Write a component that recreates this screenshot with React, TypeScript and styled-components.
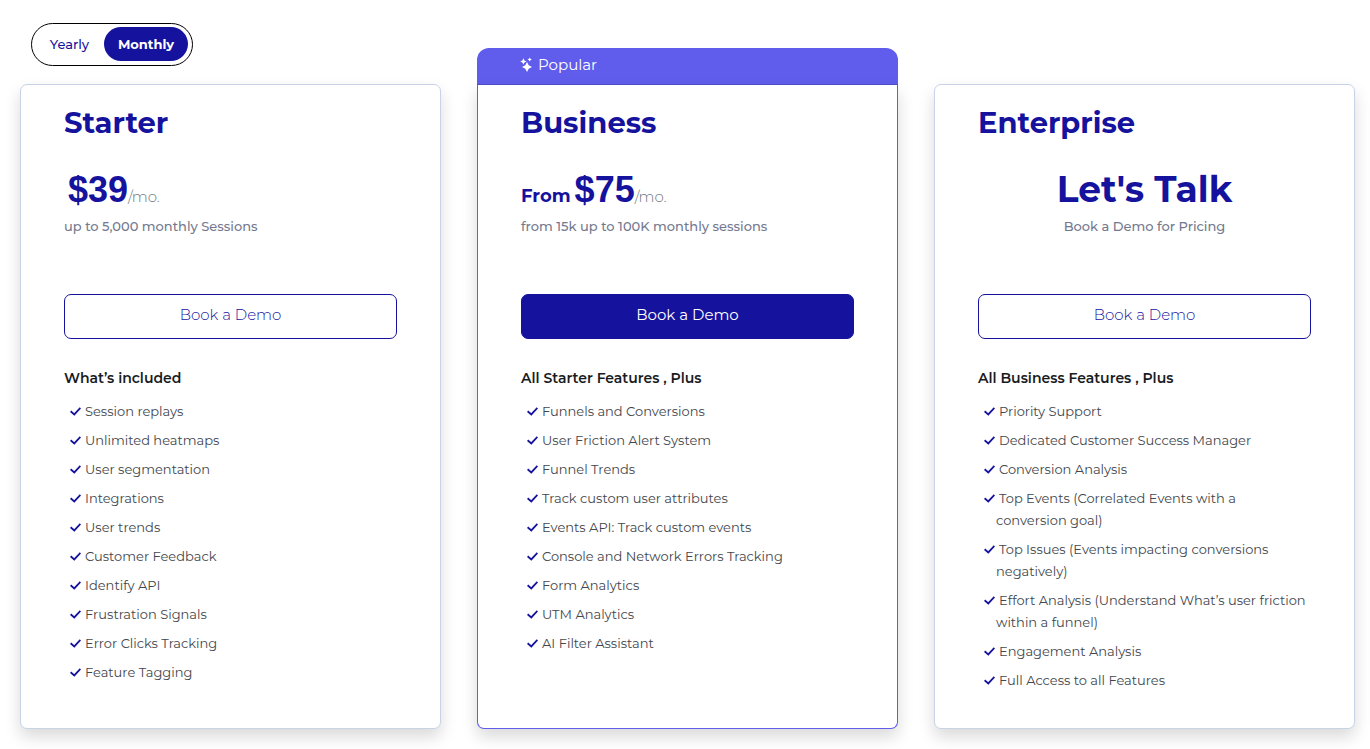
import React, { useState } from "react";
import styled, { createGlobalStyle, css } from "styled-components";

const navy = "#15129d";
const violet = "#605dec";

const GlobalStyle = createGlobalStyle`
  *, *::before, *::after { box-sizing: border-box; }
  body {
    margin: 0;
    background: #fff;
    color: #212529;
    font-family: Montserrat, Inter, "Open Sans", sans-serif;
    font-size: 13px;
    line-height: 22px;
  }
`;

const Pricing = styled.main`
  display: grid;
  grid-template-columns: repeat(3, minmax(0, 1fr));
  grid-template-rows: auto auto;
  column-gap: 36px;
  padding: 23px 15px 20px 20px;
`;

const Toggle = styled.div`
  grid-column: 1;
  justify-self: start;
  display: flex;
  height: 43px;
  margin: 0 0 18px 11px;
  padding: 3px 4px 4px 3px;
  border: 1px solid #000;
  border-radius: 22px;
`;

const ToggleOption = styled.button<{ $active: boolean }>`
  width: ${(p) => (p.$active ? "84px" : "69px")};
  height: 34px;
  padding: 0;
  border: 0;
  border-radius: 17px;
  background: ${(p) => (p.$active ? navy : "transparent")};
  color: ${(p) => (p.$active ? "#fff" : navy)};
  font: inherit;
  font-weight: ${(p) => (p.$active ? 700 : 500)};
  cursor: pointer;
`;

const Banner = styled.div`
  grid-column: 2;
  align-self: end;
  display: flex;
  gap: 5px;
  height: 36px;
  padding: 6px 43px 0;
  border-radius: 12px 12px 0 0;
  background: ${violet};
  color: #fff;
  font-size: 15px;
`;

const Card = styled.section<{ $featured?: boolean }>`
  grid-row: 2;
  padding: 20px 43px 37px;
  border: 1px solid ${(p) => (p.$featured ? violet : "#c8d3e8")};
  border-radius: ${(p) => (p.$featured ? "0 0 7px 7px" : "7px")};
  background: #fff;
  box-shadow: 0 8px 16px rgba(0, 0, 0, 0.15);
  ${(p) => p.$featured && css`border-top-color: #4f4bc8;`}
`;

const PlanName = styled.h2`
  margin: 0;
  color: ${navy};
  font-size: 29px;
  font-weight: 700;
  line-height: 36px;
`;

const PriceBlock = styled.div<{ $centered?: boolean }>`
  height: 125px;
  margin: 28px 0 0;
  text-align: ${(p) => (p.$centered ? "center" : "left")};
`;

const Price = styled.p<{ $inset?: boolean }>`
  height: 46px;
  margin: 0;
  padding-left: ${(p) => (p.$inset ? "4px" : "0")};
  color: ${navy};
  font-size: 36px;
  font-weight: 700;
  line-height: 40px;
`;

const Prefix = styled.span`
  margin-right: 4px;
  font-size: 18px;
`;

const Amount = styled.span`
  font-family: "Liberation Sans", Arial, sans-serif;
`;

const Period = styled.span`
  color: #6c757d;
  font-size: 15px;
  font-weight: 300;
`;

const Quota = styled.p`
  margin: 0;
  color: #74798f;
  font-weight: 500;
`;

const DemoButton = styled.button<{ $filled?: boolean }>`
  display: block;
  width: 100%;
  height: 45px;
  padding: 0 0 3px;
  border: 1px solid ${navy};
  border-radius: 7px;
  background: ${(p) => (p.$filled ? navy : "#fff")};
  color: ${(p) => (p.$filled ? "#fff" : navy)};
  font: inherit;
  font-size: 15px;
  font-weight: ${(p) => (p.$filled ? 400 : 300)};
  cursor: pointer;
`;

const FeatureHeading = styled.h3`
  margin: 28px 0 11px;
  color: #191c1f;
  font-size: 14px;
  font-weight: 600;
  line-height: 22px;
`;

const FeatureList = styled.ul`
  display: grid;
  gap: 7px;
  margin: 0;
  padding: 0 3px 0 18px;
  list-style: none;
`;

const Feature = styled.li`
  color: #43474c;
  font-weight: 400;
  text-indent: -12px;
`;

const CheckSvg = styled.svg`
  margin-right: 4px;
`;

const SparkleSvg = styled.svg`
  flex: none;
  margin-top: 3px;
`;

const Check = () => (
  <CheckSvg width="11" height="9" viewBox="0 0 11 9" fill="none" aria-hidden="true">
    <path d="M0.6 4.2 4.3 7.4 10.4 0.9" stroke={navy} strokeWidth="1.8" />
  </CheckSvg>
);

const Sparkles = () => (
  <SparkleSvg width="13" height="16" viewBox="0 0 13 16" fill="currentColor" aria-hidden="true">
    <path d="M7 5 8.7 8.3 12 10l-3.3 1.7L7 15l-1.7-3.3L2 10l3.3-1.7z" />
    <path d="M3.4 1.2 4.4 3.4 6.6 4.4 4.4 5.4 3.4 7.6 2.4 5.4 0.2 4.4 2.4 3.4z" />
    <path d="M9.7 0.4 10.4 1.8 11.8 2.5 10.4 3.2 9.7 4.6 9 3.2 7.6 2.5 9 1.8z" />
  </SparkleSvg>
);

interface Plan {
  name: string;
  prefix?: string;
  amount?: string;
  quote?: string;
  quota: string;
  featured?: boolean;
  heading: string;
  features: string[];
}

const plans: Plan[] = [
  {
    name: "Starter",
    amount: "$39",
    quota: "up to 5,000 monthly Sessions",
    heading: "What’s included",
    features: [
      "Session replays",
      "Unlimited heatmaps",
      "User segmentation",
      "Integrations",
      "User trends",
      "Customer Feedback",
      "Identify API",
      "Frustration Signals",
      "Error Clicks Tracking",
      "Feature Tagging",
    ],
  },
  {
    name: "Business",
    prefix: "From",
    amount: "$75",
    quota: "from 15k up to 100K monthly sessions",
    featured: true,
    heading: "All Starter Features , Plus",
    features: [
      "Funnels and Conversions",
      "User Friction Alert System",
      "Funnel Trends",
      "Track custom user attributes",
      "Events API: Track custom events",
      "Console and Network Errors Tracking",
      "Form Analytics",
      "UTM Analytics",
      "AI Filter Assistant",
    ],
  },
  {
    name: "Enterprise",
    quote: "Let's Talk",
    quota: "Book a Demo for Pricing",
    heading: "All Business Features , Plus",
    features: [
      "Priority Support",
      "Dedicated Customer Success Manager",
      "Conversion Analysis",
      "Top Events (Correlated Events with a conversion goal)",
      "Top Issues (Events impacting conversions negatively)",
      "Effort Analysis (Understand What’s user friction within a funnel)",
      "Engagement Analysis",
      "Full Access to all Features",
    ],
  },
];

const PlanCard = ({ plan }: { plan: Plan }) => (
  <Card $featured={plan.featured}>
    <PlanName>{plan.name}</PlanName>
    <PriceBlock $centered={!plan.amount}>
      <Price $inset={!!plan.amount && !plan.prefix}>
        {plan.prefix && <Prefix>{plan.prefix}</Prefix>}
        {plan.amount ? (
          <>
            <Amount>{plan.amount}</Amount>
            <Period>/mo.</Period>
          </>
        ) : (
          plan.quote
        )}
      </Price>
      <Quota>{plan.quota}</Quota>
    </PriceBlock>
    <DemoButton type="button" $filled={plan.featured}>
      Book a Demo
    </DemoButton>
    <FeatureHeading>{plan.heading}</FeatureHeading>
    <FeatureList>
      {plan.features.map((feature) => (
        <Feature key={feature}>
          <Check />
          {feature}
        </Feature>
      ))}
    </FeatureList>
  </Card>
);

export default function App() {
  const [period, setPeriod] = useState("Monthly");
  return (
    <>
      <GlobalStyle />
      <Pricing>
        <Toggle role="group" aria-label="Billing period">
          {["Yearly", "Monthly"].map((option) => (
            <ToggleOption
              key={option}
              type="button"
              $active={period === option}
              aria-pressed={period === option}
              onClick={() => setPeriod(option)}
            >
              {option}
            </ToggleOption>
          ))}
        </Toggle>
        <Banner>
          <Sparkles />
          Popular
        </Banner>
        {plans.map((plan) => (
          <PlanCard key={plan.name} plan={plan} />
        ))}
      </Pricing>
    </>
  );
}
